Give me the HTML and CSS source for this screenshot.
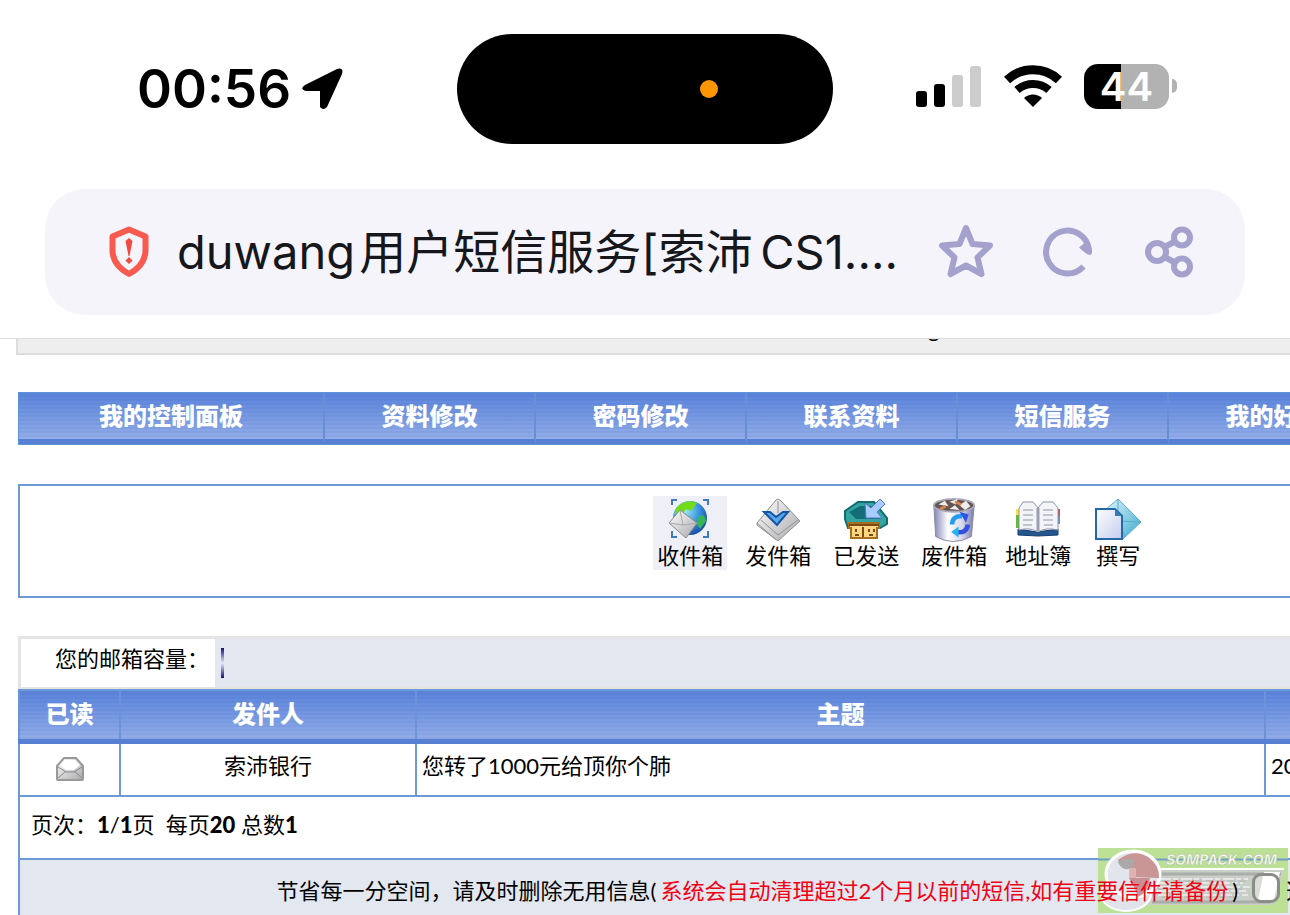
FILE: index.html
```html
<!DOCTYPE html>
<html lang="zh-CN">
<head>
    <meta charset="UTF-8">
    <meta name="viewport" content="width=device-width, initial-scale=1.0">
    <title>duwang用户短信服务</title>
    <link rel="stylesheet" href="styles.css">
</head>
<body>
    <header class="browser">
        <div class="status-bar">
            <div class="status-left">
                <span class="clock">00:56</span>
                <svg width="44" height="44" viewBox="0 0 44 44"><path d="M4 18 L36 2 Q43 0 41 7 L26 40 Q22 44 19 40 V24 H5 Q-2 22 4 18Z"/></svg>
            </div>
            <div class="island"><span class="island-dot"></span></div>
            <div class="status-right">
                <svg width="66" height="44" viewBox="0 0 66 44">
                    <rect x="0" y="27" width="11" height="16" rx="3"/>
                    <rect x="18" y="20" width="11" height="23" rx="3"/>
                    <rect x="36" y="11" width="11" height="32" rx="3" fill="#ccc"/>
                    <rect x="54" y="2" width="11" height="41" rx="3" fill="#ccc"/>
                </svg>
                <svg width="58" height="44" viewBox="0 0 58 44">
                    <path d="M3 16 A38 38 0 0 1 55 16" fill="none" stroke="#000" stroke-width="9"/>
                    <path d="M13 26 A24 24 0 0 1 45 26" fill="none" stroke="#000" stroke-width="8"/>
                    <path d="M20 34 A13 13 0 0 1 38 34 L29 43Z"/>
                </svg>
                <div class="battery"><span class="battery-level">44</span><span class="battery-tip"></span></div>
            </div>
        </div>
        <div class="url-bar">
            <svg width="40" height="52" viewBox="0 0 40 52">
                <path d="M20 3.500 L36.500 10.500 V24 C36.500 35 29 43 20 48 C11 43 3.500 35 3.500 24 V10.500Z" fill="none" stroke="#f85a50" stroke-width="6" stroke-linejoin="round"/>
                <path d="M20 12 L23.500 15 L20.500 30 H19.500 L16.500 15Z M20 31 L23.500 34.500 L20 38 L16.500 34.500Z" fill="#f04a42"/>
            </svg>
            <input class="url-input" type="text" aria-label="地址栏" value="duwang&#x200A;用户短信服务[索沛&#x2006;CS1....">
            <button class="url-button" type="button" aria-label="收藏">
                <svg width="56" height="56" viewBox="0 0 56 56"><path d="M28 4 L34.500 20 L52 21.500 L39.500 33.500 L43.500 50 L28 41.500 L12.500 50 L16.500 33.500 L4 21.500 L21.500 20Z"/></svg>
            </button>
            <button class="url-button" type="button" aria-label="刷新">
                <svg width="56" height="56" viewBox="0 0 56 56"><path d="M43.500 42.500 A21.500 21.500 0 1 1 49 26"/><path class="solid" d="M39 23.500 L47 17 L52 26 Q52.500 31 49.500 31 Q47 31 39 23.500Z"/></svg>
            </button>
            <button class="url-button" type="button" aria-label="分享">
                <svg width="56" height="56" viewBox="0 0 56 56"><circle cx="15" cy="28" r="9"/><circle cx="40" cy="13.500" r="8"/><circle cx="40" cy="42.500" r="8"/><path d="M22.500 23 L33 17.500 M22.500 33 L33 38.500"/></svg>
            </button>
        </div>
    </header>

    <main class="forum">
        <div class="user-strip">duwang</div>

        <nav class="menu">
            <a href="#" class="menu-item menu-first">我的控制面板</a>
            <a href="#" class="menu-item">资料修改</a>
            <a href="#" class="menu-item">密码修改</a>
            <a href="#" class="menu-item">联系资料</a>
            <a href="#" class="menu-item">短信服务</a>
            <a href="#" class="menu-item">我的好友</a>
            <span class="menu-item menu-rest"></span>
        </nav>

        <div class="toolbar">
            <a href="#" class="tool active">
                <svg width="44" height="44" viewBox="0 0 44 44">
                    <defs>
                        <radialGradient id="globe" cx=".35" cy=".3" r=".8"><stop offset="0" stop-color="#9ee8f8"/><stop offset=".5" stop-color="#3d98e0"/><stop offset="1" stop-color="#123f9c"/></radialGradient>
                        <linearGradient id="paper" x1="0" y1="0" x2="1" y2="1"><stop offset="0" stop-color="#fff"/><stop offset="1" stop-color="#a9a9ad"/></linearGradient>
                        <linearGradient id="sky" x1="0" y1="0" x2="1" y2="1"><stop offset="0" stop-color="#dff6fc"/><stop offset="1" stop-color="#3ba9cf"/></linearGradient>
                        <linearGradient id="can"><stop offset="0" stop-color="#8284b4"/><stop offset=".35" stop-color="#fff"/><stop offset=".7" stop-color="#d8d8ec"/><stop offset="1" stop-color="#777aa8"/></linearGradient>
                        <linearGradient id="sheet" x1="0" y1="0" x2="1" y2="1"><stop offset="0" stop-color="#fff"/><stop offset="1" stop-color="#c3cdf0"/></linearGradient>
                    </defs>
                    <circle cx="22" cy="20" r="17" fill="url(#globe)"/>
                    <path d="M8 10 Q18 0 29 5 L23 13 L18 11 L14 17 L7 16Z" fill="#72dc19"/>
                    <path d="M31 18 Q37 15 38 23 L32 31 L28 25Z" fill="#37b657"/>
                    <path d="M1 25 L12 12 L29 25 L18 40Z" fill="url(#paper)" stroke="#8b8b91"/>
                    <path d="M1 25 L15 27 L29 25 M12 12 L15 27" fill="none" stroke="#aaa"/>
                    <path d="M4 7 V2 H9 M35 2 H40 V7 M4 33 V39 H9 M35 39 H40 V33" fill="none" stroke="#4379bd" stroke-width="2"/>
                </svg>
                <span>收件箱</span>
            </a>
            <a href="#" class="tool">
                <svg width="44" height="44" viewBox="0 0 44 44">
                    <path d="M1 25 L20 2 Q22 0 24 2 L44 23 L22 43 L1 27Z" fill="url(#paper)" stroke="#8b8b91"/>
                    <path d="M5 22 L22 37 L42 22 M22 3 V15 M1 25 L20 42" fill="none" stroke="#929297"/>
                    <path d="M8 14 H14 L20 19 L27 14 H32 L21 27Z" fill="#58a7ed" stroke="#1556a3" stroke-width="2"/>
                </svg>
                <span>发件箱</span>
            </a>
            <a href="#" class="tool">
                <svg width="44" height="44" viewBox="0 0 44 44">
                    <path d="M1 13 L14 4 H30 L43 20 V26 L36 30 H4 L1 21Z" fill="#33a5a0" stroke="#126d70" stroke-width="2"/>
                    <path d="M5 14 L16 8 H27 L37 21 H12Z" fill="#146e78"/>
                    <path d="M36 1 L41 6 L33 14 L38 20 L22 20 L21 5 L27 10Z" fill="#a9ccff" stroke="#5474c5"/>
                    <path d="M5 25 H35 V30 H33 V40 H7 V30 H5Z" fill="#ffd784" stroke="#a86d1f" stroke-width="2"/>
                    <path d="M5 27 H35 M19 29 V39 M12 31 V34 M25 31 V34 M30 31 V34 M11 37 H15 M25 37 H29" stroke="#7b4b15" stroke-width="2"/>
                </svg>
                <span>已发送</span>
            </a>
            <a href="#" class="tool">
                <svg width="46" height="48" viewBox="0 0 46 48">
                    <path d="M1 8 L3 42 Q22 53 42 42 L45 8Z" fill="url(#can)" stroke="#85849c"/>
                    <ellipse cx="23" cy="8" rx="22" ry="7" fill="#655653" stroke="#aaa9b9" stroke-width="2"/>
                    <path d="M6 7 L13 3 L17 9Z M18 4 L27 1 L25 7Z M29 8 L36 3 L41 9 L35 13Z M18 12 L24 8 L29 13Z" fill="#eee"/>
                    <path d="M8 12 L14 9 M24 4 L31 7" stroke="#d9834d" stroke-width="3"/>
                    <path d="M21 29 Q21 19 32 20" fill="none" stroke="#229cf2" stroke-width="5"/>
                    <path d="M29 15 L39 18 L36 27Z" fill="#2a55e9"/>
                    <path d="M38 29 Q37 39 26 37" fill="none" stroke="#3450dd" stroke-width="5"/>
                    <path d="M28 31 L20 37 L28 43Z" fill="#28b1f0"/>
                </svg>
                <span>废件箱</span>
            </a>
            <a href="#" class="tool tool-book">
                <svg width="46" height="44" viewBox="0 0 46 44">
                    <path d="M1 11 H6 V30 H1Z" fill="#65ba35"/><path d="M1 11 H6 V17 H1Z" fill="#ffe14a"/>
                    <path d="M40 11 H45 V18 H40Z" fill="#e9424e"/><path d="M40 18 H45 V26 H40Z" fill="#5c91d5"/>
                    <path d="M3 31 L22 34 L43 31 V37 L23 38 L3 37Z" fill="#24558d" stroke="#173d72"/>
                    <path d="M4 10 L8 4 H18 L23 10 L28 4 H38 L43 10 V32 Q31 29 23 34 Q15 29 4 32Z" fill="#f3f4f8" stroke="#8c94a5"/>
                    <path d="M23 10 V33" stroke="#9aa0b0" stroke-width="3"/>
                    <path d="M8 12 H18 M8 17 H18 M8 22 H18 M8 27 H17 M28 12 H38 M28 17 H38 M28 22 H38 M29 27 H38" stroke="#c2c4cf" stroke-width="2"/>
                </svg>
                <span>地址簿</span>
            </a>
            <a href="#" class="tool tool-write">
                <svg width="46" height="44" viewBox="0 0 46 44">
                    <path d="M10 12 L23 1 L46 24 L28 41 H13Z" fill="url(#sky)" stroke="#59b2d6"/>
                    <path d="M23 1 V23 L46 24 M23 23 L30 39" fill="none" stroke="#5ba9c6"/>
                    <path d="M1 11 H20 L27 18 V41 H1Z" fill="url(#sheet)" stroke="#2368a7" stroke-width="2"/>
                    <path d="M20 11 V18 H27Z" fill="#367db2"/>
                </svg>
                <span>撰写</span>
            </a>
        </div>

        <div class="capacity">
            <div class="capacity-label">您的邮箱容量：</div>
            <div class="capacity-track"><span class="capacity-bar"></span></div>
        </div>
        <table class="mail">
            <colgroup><col class="col-read"><col class="col-from"><col class="col-subject"><col></colgroup>
            <thead>
                <tr><th>已读</th><th>发件人</th><th>主题</th><th>日期</th></tr>
            </thead>
            <tbody>
                <tr class="mail-row">
                    <td class="center">
                        <svg class="read-icon" width="28" height="24" viewBox="0 0 28 24">
                            <path d="M1 9 L8 1 H20 L27 9 V22 Q27 23 26 23 H2 Q1 23 1 22Z" fill="url(#paper)" stroke="#999" stroke-width="2"/>
                            <path d="M2 10 L10 15 H18 L26 10 M2 21 L10 14 M26 21 L18 14" fill="none" stroke="#888"/>
                            <path d="M4 8 L9 3 H19 L24 8 L18 13 H10Z" fill="#fff"/>
                        </svg>
                    </td>
                    <td class="center">索沛银行</td>
                    <td>您转了1000元给顶你个肺</td>
                    <td>2024</td>
                </tr>
                <tr class="pager">
                    <td colspan="4">页次：<b>1</b>/<b>1</b>页&nbsp; 每页<b>20</b> 总数<b>1</b></td>
                </tr>
                <tr class="notice">
                    <td colspan="4">
                        <div class="notice-line">
                            <span>节省每一分空间，请及时删除无用信息(<span class="warn">系统会自动清理超过2个月以前的短信,如有重要信件请备份</span>)</span>
                            <input type="checkbox" id="checkAll" class="check-all">
                            <label for="checkAll">选中本页所有的短信记录</label>
                        </div>
                    </td>
                </tr>
            </tbody>
        </table>
    </main>

    <!-- site watermark, bottom right -->
    <svg class="watermark" width="190" height="65" viewBox="0 0 190 65">
        <rect width="190" height="65" fill="#bce096"/>
        <path d="M0 11.500 H190" stroke="#6f9fc8" stroke-width="2"/>
        <path d="M45 22 H186 L178 52 Q177 57 172 57 H45Z" fill="#c9cfc6"/>
        <path d="M52 26 H183 M54 54 H172" stroke="#a8aea8" stroke-width="3"/>
        <path d="M62 31 H150 M58 35 H145 M61 39 H152 M57 43 H148 M60 47 H150" stroke="#e6e6e8" stroke-width="2" stroke-dasharray="11 2 5 3"/>
        <path d="M64 33 H148 M60 41 H145 M64 49 H140" stroke="#b2b5b6" stroke-dasharray="7 4"/>
        <path d="M50 21 H186" stroke="#fff" stroke-width="2"/>
        <ellipse cx="28" cy="46" rx="25" ry="17" fill="#e1e3ea" stroke="#fff" stroke-width="2"/>
        <ellipse cx="35" cy="26" rx="27" ry="23" fill="#e3e5ec" stroke="#fff" stroke-width="3"/>
        <path d="M20 12 Q35 0 50 9 Q62 18 61 30 L31 29 L34 18 Q24 25 20 12Z" fill="#c99595"/>
        <path d="M20 14 Q28 8 37 12 L34 20 Q24 24 20 14Z" fill="#aaa8a8"/>
        <path d="M31 20 H38 V30 H31Z" fill="#dfb3b3"/>
        <path d="M31 30 H52 Q50 45 40 49 Q36 37 31 30Z" fill="#c98f94"/>
        <text x="68" y="17" class="watermark-text">SOMPACK.COM</text>
        <path d="M166 24 H182 L176 52 H160Z" fill="#fff"/>
    </svg>
</body>
</html>
```
FILE: styles.css
```css
* {
    box-sizing: border-box;
}

body {
    position: relative;
    margin: 0;
    height: 100vh;
    overflow: hidden;
    background: #fff;
    color: #000;
    font-family: Lato, "Noto Sans CJK SC", sans-serif;
    font-size: 22px;
    line-height: 32px;
}

svg {
    display: block;
    flex-shrink: 0;
}

a {
    text-decoration: none;
    color: inherit;
}

/* phone status bar and address bar */
.browser {
    padding: 34px 0 23px;
    border-bottom: 1px solid #dedede;
    font-family: Inter, "Noto Sans CJK SC", sans-serif;
}

.status-bar {
    display: grid;
    grid-template-columns: 1fr 376px 1fr;
    align-items: center;
    height: 110px;
    margin-bottom: 45px;
}

.status-left {
    display: flex;
    align-items: center;
    gap: 10px;
    padding-left: 137px;
}

.clock {
    font-size: 53px;
    line-height: 64px;
    font-weight: 600;
}

.island {
    display: flex;
    align-items: center;
    justify-content: flex-end;
    height: 110px;
    padding-right: 115px;
    border-radius: 55px;
    background: #000;
}

.island-dot {
    width: 18px;
    height: 18px;
    border-radius: 50%;
    background: #ff9500;
}

.status-right {
    display: flex;
    align-items: center;
    gap: 22px;
    padding: 0 0 6px 83px;
}

.battery {
    display: flex;
    align-items: center;
    gap: 3px;
}

.battery-level {
    width: 85px;
    border-radius: 14px;
    background: linear-gradient(90deg, #000 44%, #b2b2b2 44%);
    color: #fff;
    font-size: 40px;
    line-height: 45px;
    font-weight: 600;
    text-align: center;
}

.battery-tip {
    width: 5px;
    height: 14px;
    border-radius: 0 5px 5px 0;
    background: #b2b2b2;
}

.url-bar {
    display: flex;
    align-items: center;
    height: 126px;
    margin: 0 45px;
    padding: 0 47px 0 64px;
    border-radius: 40px;
    background: #f5f4fa;
}

.url-input {
    flex: 1;
    min-width: 0;
    margin: 0 12px 0 28px;
    padding: 0;
    border: none;
    outline: none;
    background: none;
    color: #15171c;
    font-family: inherit;
    font-size: 47px;
    line-height: 72px;
}

.url-button {
    margin-left: 24px;
    padding: 0 0 0 22px;
    border: none;
    background: none;
    cursor: pointer;
}

.url-input + .url-button {
    margin-left: 0;
    padding-left: 0;
}

.url-button svg {
    fill: none;
    stroke: #a5a1cd;
    stroke-width: 6;
    stroke-linejoin: round;
}

.url-button .solid {
    fill: #a5a1cd;
    stroke: none;
}

/* forum page, wider than the screen */
.forum {
    width: 138.5%;
    padding-left: 18px;
}

.user-strip {
    display: flex;
    align-items: flex-end;
    justify-content: center;
    height: 16px;
    margin: 0 0 37px -2px;
    padding-bottom: 4px;
    overflow: hidden;
    border: 2px solid #dcdcdc;
    border-top: none;
    background: #eee;
    line-height: 40px;
}

.menu {
    display: flex;
    height: 53px;
    margin-bottom: 39px;
    border: 1px solid #5d94d8;
}

.menu-item,
.mail th {
    border-bottom: 5px solid #5780d5;
    background: repeating-linear-gradient(transparent 0 2px, rgba(40, 90, 190, .08) 2px 4px), linear-gradient(#5a83da, #93ade8);
    color: #fff;
    font-size: 24px;
    line-height: 46px;
    font-weight: 900;
    text-align: center;
}

.menu-item {
    flex: 0 0 211px;
    border-right: 2px solid #668fd5;
}

.menu-first {
    flex-basis: 306px;
}

.menu-rest {
    flex: 1;
}

.toolbar {
    display: flex;
    justify-content: center;
    align-items: flex-start;
    gap: 14px;
    height: 114px;
    margin-bottom: 38px;
    padding-top: 10px;
    border: 2px solid #6b9ad6;
}

.tool {
    display: flex;
    flex-direction: column;
    align-items: center;
    width: 74px;
    height: 74px;
    padding-top: 2px;
    line-height: 28px;
}

.tool svg {
    height: 44px;
}

.tool-book {
    width: 66px;
}

.tool-write {
    width: 66px;
}

.active {
    background: #eeeff7;
}

.capacity {
    display: flex;
    height: 53px;
    border: 3px solid #e4e4e4;
    border-bottom-width: 2px;
    background: #e3e7ef;
}

.capacity-label {
    width: 194px;
    padding: 4px 0 0 34px;
    background: #fff;
    line-height: 32px;
    white-space: nowrap;
}

.capacity-track {
    padding: 9px 6px;
}

.capacity-bar {
    display: block;
    width: 3px;
    height: 30px;
    background: linear-gradient(#10107c, #e8e8ff 50%, #10107c);
}

.mail {
    width: 100%;
    table-layout: fixed;
    border-collapse: collapse;
    border: 2px solid #6b9ad6;
}

.col-read {
    width: 101px;
}

.col-from {
    width: 296px;
}

.col-subject {
    width: 849px;
}

.mail th {
    height: 51px;
    padding: 0 0 2px;
    border-left: 2px solid #6a93d9;
    line-height: 40px;
}

.mail td {
    padding: 0 5px;
    border: 2px solid #6b9ad6;
}

.mail .center {
    text-align: center;
}

.mail-row td {
    height: 55px;
    padding-bottom: 6px;
}

.read-icon {
    margin: 6px auto 0;
}

.mail .pager td {
    height: 63px;
    padding: 0 11px 6px;
}

.pager b {
    font-weight: 900;
}

.notice td {
    height: 64px;
    background: #e3e7ef;
}

.notice-line {
    position: relative;
    z-index: 2;
    display: flex;
    align-items: center;
    justify-content: center;
    white-space: nowrap;
}

.warn {
    margin: 0 4px;
    color: #f00012;
}

.check-all {
    appearance: none;
    width: 28px;
    height: 30px;
    margin: 0 6px 6px 14px;
    border: 3px solid #8b8e88;
    border-radius: 9px;
    background: rgba(255, 255, 255, .3);
}

.watermark {
    position: absolute;
    right: 2px;
    bottom: 2px;
    z-index: 1;
}

.watermark-text {
    fill: #f4f7ea;
    stroke: #a9bd95;
    stroke-width: .5px;
    font-family: Inter, sans-serif;
    font-size: 14px;
    font-weight: 800;
    font-style: italic;
}
```
